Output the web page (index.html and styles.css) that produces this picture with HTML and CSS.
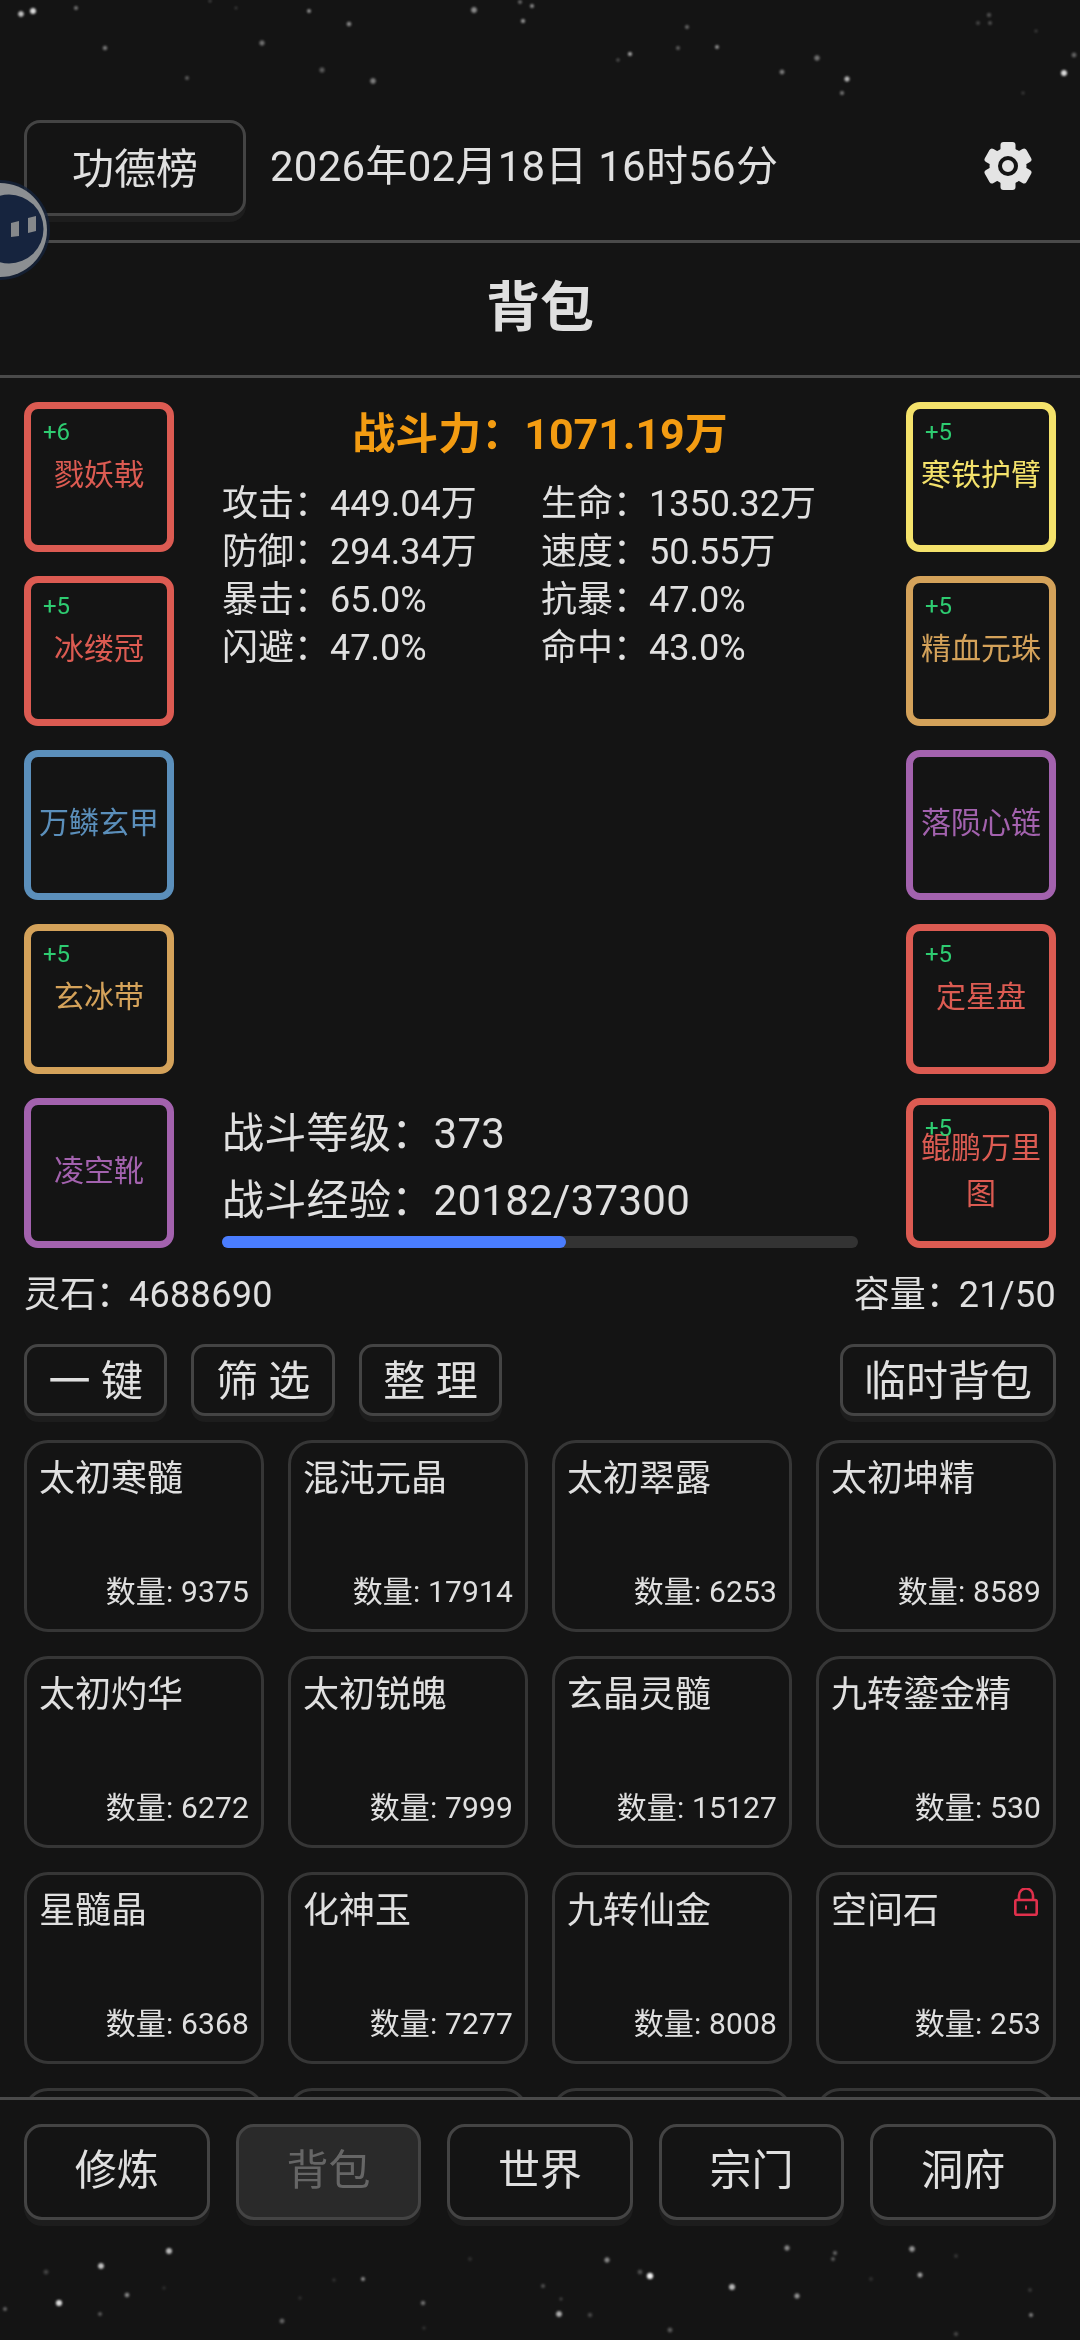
FILE: index.html
```html
<!DOCTYPE html>
<html lang="zh-CN">
<head>
    <meta charset="UTF-8">
    <meta name="viewport" content="width=device-width, initial-scale=1.0">
    <title>背包</title>
    <link rel="stylesheet" href="styles.css">
</head>

<body>

    <!-- Star backdrop -->
    <svg class="stars stars-top" width="1080" height="110" viewBox="0 0 1080 110">
        <defs>
            <filter id="soft" x="-100%" y="-100%" width="300%" height="300%"><feGaussianBlur stdDeviation="0.9"/></filter>
        </defs>
        <g fill="#fff" stroke="#fff" stroke-width="1" filter="url(#soft)">
            <circle cx="21" cy="14" r="2.4" opacity="0.75"/><circle cx="33" cy="11" r="2.6" opacity="0.85"/>
            <circle cx="76" cy="8" r="1.6" opacity="0.4"/><circle cx="105" cy="48" r="1.8" opacity="0.45"/>
            <circle cx="262" cy="43" r="2.2" opacity="0.4"/><circle cx="187" cy="78" r="1.6" opacity="0.3"/>
            <circle cx="322" cy="70" r="2.2" opacity="0.3"/><circle cx="373" cy="81" r="2.4" opacity="0.45"/>
            <circle cx="309" cy="11" r="1.5" opacity="0.55"/><circle cx="349" cy="24" r="1.9" opacity="0.5"/>
            <circle cx="474" cy="10" r="2.5" opacity="0.5"/><circle cx="523" cy="21" r="1.7" opacity="0.55"/>
            <circle cx="532" cy="6" r="1.6" opacity="0.5"/><circle cx="520" cy="2" r="1.6" opacity="0.35"/>
            <circle cx="687" cy="27" r="1.6" opacity="0.35"/><circle cx="630" cy="54" r="1.7" opacity="0.6"/>
            <circle cx="618" cy="60" r="1.3" opacity="0.25"/><circle cx="678" cy="48" r="1.6" opacity="0.3"/>
            <circle cx="717" cy="47" r="1.5" opacity="0.55"/><circle cx="817" cy="58" r="2.3" opacity="0.4"/>
            <circle cx="782" cy="72" r="2" opacity="0.45"/><circle cx="847" cy="79" r="2.2" opacity="0.7"/>
            <circle cx="842" cy="93" r="1.7" opacity="0.4"/><circle cx="1064" cy="73" r="2.6" opacity="0.85"/>
            <circle cx="1074" cy="55" r="2" opacity="0.35"/><circle cx="989" cy="15" r="1.8" opacity="0.25"/>
            <circle cx="978" cy="23" r="1.6" opacity="0.2"/><circle cx="990" cy="23" r="1.5" opacity="0.25"/>
            <circle cx="1036" cy="31" r="1.3" opacity="0.15"/><circle cx="1023" cy="93" r="1.3" opacity="0.15"/>
            <circle cx="236" cy="8" r="1.2" opacity="0.15"/><circle cx="210" cy="1" r="1.2" opacity="0.2"/>
        </g>
    </svg>

    <svg class="stars stars-bottom" width="1080" height="120" viewBox="0 2220 1080 120">
        <g fill="#fff" stroke="#fff" stroke-width="1" filter="url(#soft)">
            <circle cx="169" cy="2251" r="2.6" opacity="0.7"/><circle cx="101" cy="2266" r="2.5" opacity="0.75"/>
            <circle cx="46" cy="2272" r="2" opacity="0.2"/><circle cx="127" cy="2295" r="1.9" opacity="0.5"/>
            <circle cx="59" cy="2303" r="2.7" opacity="0.85"/><circle cx="5" cy="2309" r="1.5" opacity="0.35"/>
            <circle cx="100" cy="2314" r="1.5" opacity="0.3"/><circle cx="282" cy="2321" r="2" opacity="0.35"/>
            <circle cx="363" cy="2279" r="1.6" opacity="0.5"/><circle cx="334" cy="2280" r="1.3" opacity="0.12"/>
            <circle cx="423" cy="2303" r="1.8" opacity="0.4"/><circle cx="470" cy="2259" r="1.4" opacity="0.12"/>
            <circle cx="543" cy="2286" r="1.6" opacity="0.25"/><circle cx="561" cy="2299" r="1.2" opacity="0.2"/>
            <circle cx="559" cy="2314" r="2.5" opacity="0.65"/><circle cx="590" cy="2315" r="1.8" opacity="0.22"/>
            <circle cx="607" cy="2260" r="2.2" opacity="0.5"/><circle cx="640" cy="2272" r="2" opacity="0.25"/>
            <circle cx="650" cy="2276" r="2.8" opacity="0.95"/><circle cx="670" cy="2330" r="2" opacity="0.3"/>
            <circle cx="732" cy="2287" r="2.6" opacity="0.7"/><circle cx="797" cy="2296" r="2.2" opacity="0.55"/>
            <circle cx="787" cy="2248" r="2.2" opacity="0.5"/><circle cx="835" cy="2253" r="1.6" opacity="0.35"/>
            <circle cx="833" cy="2259" r="1.5" opacity="0.3"/><circle cx="912" cy="2249" r="2.4" opacity="0.55"/>
            <circle cx="956" cy="2256" r="1.4" opacity="0.15"/><circle cx="920" cy="2275" r="2.1" opacity="0.6"/>
            <circle cx="871" cy="2279" r="1.4" opacity="0.12"/><circle cx="1031" cy="2315" r="1.6" opacity="0.45"/>
            <circle cx="1030" cy="2290" r="1.5" opacity="0.15"/><circle cx="956" cy="2334" r="1.8" opacity="0.2"/>
            <circle cx="164" cy="2288" r="1.2" opacity="0.12"/><circle cx="300" cy="2298" r="1.2" opacity="0.12"/>
            <circle cx="424" cy="2328" r="1.3" opacity="0.12"/>
        </g>
    </svg>

    <!-- Floating assistant bubble -->
    <svg class="bubble" width="52" height="104" viewBox="0 178 52 104">
        <circle cx="0" cy="230" r="50" fill="#14233c" opacity="0.75"/>
        <circle cx="0" cy="230" r="47" fill="#8c8f92"/>
        <circle cx="9" cy="229" r="34.5" fill="#16243e"/>
        <path d="M11 223l8-2v15l-8 1z" fill="#85888b"/>
        <path d="M28 218l8-2v15l-8 2z" fill="#85888b"/>
    </svg>

    <div class="app">

        <!-- Top bar -->
        <header class="topbar">
            <button class="btn btn-rank">功德榜</button>
            <span class="date">2026年02月18日 16时56分</span>
            <svg class="gear" width="48" height="48" viewBox="-24 -24 48 48">
                <g fill="#e4e4e4">
                    <circle r="18.5"/>
                    <rect x="-7.5" y="-24" width="15" height="12" rx="3"/>
                    <rect x="-7.5" y="-24" width="15" height="12" rx="3" transform="rotate(60)"/>
                    <rect x="-7.5" y="-24" width="15" height="12" rx="3" transform="rotate(120)"/>
                    <rect x="-7.5" y="-24" width="15" height="12" rx="3" transform="rotate(180)"/>
                    <rect x="-7.5" y="-24" width="15" height="12" rx="3" transform="rotate(240)"/>
                    <rect x="-7.5" y="-24" width="15" height="12" rx="3" transform="rotate(300)"/>
                </g>
                <circle r="8" fill="none" stroke="#141414" stroke-width="4"/>
            </svg>
        </header>

        <h1 class="page-title">背包</h1>

        <!-- Equipment + stats -->
        <section class="equip">
            <div class="slots">
                <div class="slot red"><span class="plus">+6</span>戮妖戟</div>
                <div class="slot red"><span class="plus">+5</span>冰缕冠</div>
                <div class="slot blue">万鳞玄甲</div>
                <div class="slot gold"><span class="plus">+5</span>玄冰带</div>
                <div class="slot purple">凌空靴</div>
            </div>

            <div class="summary">
                <div class="power">战斗力：1071.19万</div>
                <div class="stats">
                    <span>攻击：449.04万</span><span>生命：1350.32万</span>
                    <span>防御：294.34万</span><span>速度：50.55万</span>
                    <span>暴击：65.0%</span><span>抗暴：47.0%</span>
                    <span>闪避：47.0%</span><span>命中：43.0%</span>
                </div>
                <div class="level">
                    <div>战斗等级：373</div>
                    <div>战斗经验：20182/37300</div>
                    <div class="bar"><div class="bar-fill" style="width: 54.1%"></div></div>
                </div>
            </div>

            <div class="slots">
                <div class="slot yellow"><span class="plus">+5</span>寒铁护臂</div>
                <div class="slot gold"><span class="plus">+5</span>精血元珠</div>
                <div class="slot purple">落陨心链</div>
                <div class="slot red"><span class="plus">+5</span>定星盘</div>
                <div class="slot red"><span class="plus">+5</span>鲲鹏万里图</div>
            </div>
        </section>

        <div class="wallet">
            <span>灵石：<span class="val">4688690</span></span>
            <span>容量：<span class="val">21/50</span></span>
        </div>

        <div class="tools">
            <button class="btn btn-tool">一 键</button>
            <button class="btn btn-tool">筛 选</button>
            <button class="btn btn-tool">整 理</button>
            <button class="btn btn-tool btn-temp">临时背包</button>
        </div>

        <!-- Inventory -->
        <div class="inventory">
            <div class="card"><div class="card-name">太初寒髓</div><div class="card-count">数量: 9375</div></div>
            <div class="card"><div class="card-name">混沌元晶</div><div class="card-count">数量: 17914</div></div>
            <div class="card"><div class="card-name">太初翠露</div><div class="card-count">数量: 6253</div></div>
            <div class="card"><div class="card-name">太初坤精</div><div class="card-count">数量: 8589</div></div>

            <div class="card"><div class="card-name">太初灼华</div><div class="card-count">数量: 6272</div></div>
            <div class="card"><div class="card-name">太初锐魄</div><div class="card-count">数量: 7999</div></div>
            <div class="card"><div class="card-name">玄晶灵髓</div><div class="card-count">数量: 15127</div></div>
            <div class="card"><div class="card-name">九转鎏金精</div><div class="card-count">数量: 530</div></div>

            <div class="card"><div class="card-name">星髓晶</div><div class="card-count">数量: 6368</div></div>
            <div class="card"><div class="card-name">化神玉</div><div class="card-count">数量: 7277</div></div>
            <div class="card"><div class="card-name">九转仙金</div><div class="card-count">数量: 8008</div></div>
            <div class="card">
                <div class="card-name">空间石</div>
                <svg class="lock" width="24" height="28" viewBox="0 0 24 28">
                    <path d="M5 12V7.5a7 7 0 0 1 14 0V12" fill="none" stroke="#e0304c" stroke-width="2.6"/>
                    <rect x="1.3" y="12" width="21.4" height="14.7" rx="1.5" fill="none" stroke="#e0304c" stroke-width="2.6"/>
                    <rect x="11" y="17.5" width="2" height="4" fill="#e0304c"/>
                </svg>
                <div class="card-count">数量: 253</div>
            </div>

            <div class="card"></div>
            <div class="card"></div>
            <div class="card"></div>
            <div class="card"></div>
        </div>

        <!-- Bottom nav -->
        <nav class="nav">
            <button class="btn btn-nav">修炼</button>
            <button class="btn btn-nav active">背包</button>
            <button class="btn btn-nav">世界</button>
            <button class="btn btn-nav">宗门</button>
            <button class="btn btn-nav">洞府</button>
        </nav>
    </div>

</body>
</html>
```

FILE: styles.css
```css
/* ===== General ===== */
body {
    margin: 0;
    width: 1080px;
    height: 2340px;
    position: relative;
    overflow: hidden;
    background: #141414;
    color: #e0e0e0;
    font-family: Roboto, "Noto Sans CJK SC", sans-serif;
}

.stars {
    position: absolute;
    left: 0;
}

.stars-top {
    top: 0;
}

.stars-bottom {
    top: 2220px;
}

.bubble {
    position: absolute;
    left: 0;
    top: 178px;
    z-index: 5;
}

.app {
    position: relative;
    padding-top: 120px;
}

/* ===== Buttons ===== */
.btn {
    box-sizing: border-box;
    background: #141414;
    color: #e0e0e0;
    border: 3px solid #444;
    font-family: inherit;
    box-shadow: 0 6px 0 #1d1d1d;
    padding: 0;
}

.btn-rank {
    width: 222px;
    height: 96px;
    border-radius: 16px;
    font-size: 42px;
    padding-bottom: 6px;
}

.btn-tool {
    height: 72px;
    padding: 0 21.5px 6px;
    border-radius: 14px;
    font-size: 42px;
}

.btn-temp {
    margin-left: auto;
    padding: 0 21px 6px;
}

.btn-nav {
    flex: 1;
    height: 96px;
    border-radius: 18px;
    font-size: 42px;
    padding-bottom: 11px;
}

.btn-nav.active {
    background: #2a2a2a;
    color: #666;
}

/* ===== Top bar ===== */
.topbar {
    display: flex;
    align-items: flex-start;
    height: 120px;
    padding: 0 24px;
    border-bottom: 3px solid #4a4a4a;
}

.date {
    margin-left: 24px;
    font-size: 42px;
    line-height: 94px;
    letter-spacing: 0.25px;
}

.gear {
    margin: 22px 24px 0 auto;
}

.page-title {
    margin: 0;
    height: 132px;
    line-height: 132px;
    text-align: center;
    font-size: 54px;
    font-weight: 700;
    border-bottom: 3px solid #4a4a4a;
}

/* ===== Equipment ===== */
.equip {
    display: flex;
    padding: 24px 24px 0;
}

.slots {
    display: flex;
    flex-direction: column;
    gap: 24px;
    width: 150px;
}

.slot {
    box-sizing: border-box;
    position: relative;
    display: flex;
    align-items: center;
    justify-content: center;
    width: 150px;
    height: 150px;
    padding: 0 0 4px;
    border: 7px solid;
    border-radius: 14px;
    font-size: 30px;
    line-height: 46px;
    text-align: center;
}

.plus {
    position: absolute;
    left: 12px;
    top: 6px;
    font-size: 24px;
    line-height: 34px;
    color: #2ecc71;
}

.red { color: #dc5b52; }
.blue { color: #5b8fbb; }
.gold { color: #d4a25a; }
.purple { color: #a362ae; }
.yellow { color: #f4e26b; }

/* ===== Summary column ===== */
.summary {
    flex: 1;
    display: flex;
    flex-direction: column;
    margin: 0 48px;
}

.power {
    text-align: center;
    color: #f39c12;
    font-size: 43px;
    font-weight: 700;
    line-height: 64px;
    margin-bottom: 14px;
}

.stats {
    display: grid;
    grid-template-columns: 319px 1fr;
    font-size: 36px;
    line-height: 48px;
}

.level {
    margin-top: auto;
    font-size: 42px;
    line-height: 67px;
    letter-spacing: 0.3px;
}

.bar {
    height: 12px;
    margin-top: 2px;
    border-radius: 6px;
    background: #333;
}

.bar-fill {
    height: 100%;
    border-radius: 6px;
    background: #4a7dff;
}

/* ===== Wallet + tools ===== */
.wallet {
    display: flex;
    justify-content: space-between;
    padding: 24px 24px 0;
    font-size: 36px;
    line-height: 46px;
}

.val {
    margin-left: -3px;
    letter-spacing: 0.3px;
}

.tools {
    display: flex;
    gap: 24px;
    padding: 26px 24px 0;
}

/* ===== Inventory ===== */
.inventory {
    display: grid;
    grid-template-columns: repeat(4, 240px);
    grid-auto-rows: 192px;
    gap: 24px;
    padding: 24px 24px 0;
    box-sizing: border-box;
    height: 681px;
    overflow: hidden;
}

.card {
    box-sizing: border-box;
    position: relative;
    display: flex;
    flex-direction: column;
    justify-content: space-between;
    padding: 12px 12px 17px 12px;
    border: 3px solid #363636;
    border-radius: 24px;
}

.card-name {
    font-size: 36px;
    line-height: 48px;
}

.card-count {
    text-align: right;
    font-size: 30px;
    line-height: 40px;
    letter-spacing: 0.15px;
}

.lock {
    position: absolute;
    right: 15px;
    top: 13px;
}

/* ===== Bottom nav ===== */
.nav {
    display: flex;
    gap: 26px;
    padding: 24px 24px 0;
    border-top: 3px solid #4a4a4a;
}
```
